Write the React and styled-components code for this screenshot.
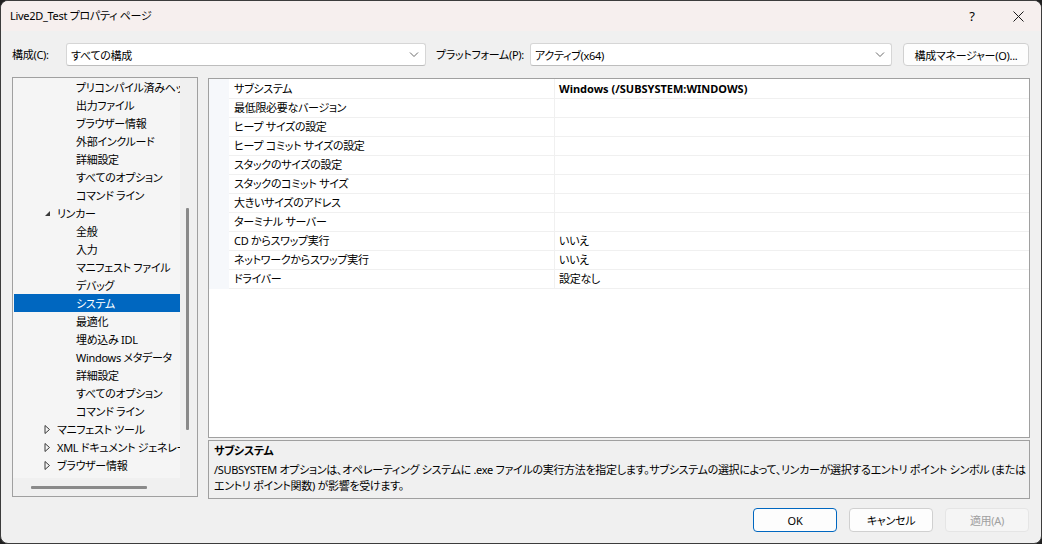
import React from 'react';
import styled, { createGlobalStyle } from 'styled-components';

const GlobalStyle = createGlobalStyle`
  html, body { margin: 0; padding: 0; background: #202020; }
  body {
    font-family: "Noto Sans", "Noto Sans CJK JP", sans-serif;
    font-size: 11px;
    letter-spacing: -0.3px;
    font-feature-settings: "palt";
    color: #000;
  }
  * { box-sizing: border-box; }
`;

const Window = styled.div`
  width: 1042px;
  height: 544px;
  display: flex;
  flex-direction: column;
  background: #f0f0f0;
  border: 1px solid #3c3c3c;
  border-radius: 8px;
  overflow: hidden;
`;

const TitleBar = styled.div`
  height: 30px;
  display: flex;
  align-items: center;
  background: #f6efee;
  padding-left: 9px;
  span { flex: 1; line-height: 30px; }
`;

const CaptionButton = styled.div`
  width: 46px;
  height: 30px;
  display: flex;
  align-items: center;
  justify-content: center;
  font-size: 13px;
`;

const Body = styled.div`
  flex: 1;
  min-width: 0;
  display: flex;
  flex-direction: column;
  padding: 12px 11px 0 11px;
`;

const Toolbar = styled.div`
  display: flex;
  align-items: center;
  height: 23px;
  white-space: nowrap;
`;

const Label = styled.label`
  width: ${p => p.w}px;
  flex: none;
  line-height: 23px;
  white-space: nowrap;
`;

const Combo = styled.div`
  width: ${p => p.w}px;
  height: 23px;
  flex: none;
  display: flex;
  align-items: center;
  justify-content: space-between;
  background: #fff;
  border: 1px solid #d6d6d6;
  border-bottom-color: #bdbdbd;
  border-radius: 3px;
  padding: 0 6px 0 4px;
  margin-right: ${p => p.mr || 0}px;
`;

const Button = styled.div`
  width: ${p => p.w || 84}px;
  height: ${p => p.h || 24}px;
  flex: none;
  display: flex;
  align-items: center;
  justify-content: center;
  white-space: nowrap;
  border-radius: 4px;
  background: ${p => (p.disabled ? '#f5f5f5' : '#fdfdfd')};
  border: 1px solid ${p => (p.primary ? '#0067c0' : p.disabled ? '#e5e5e5' : '#d0d0d0')};
  color: ${p => (p.disabled ? '#a0a0a0' : '#000')};
`;

const Main = styled.div`
  display: flex;
  gap: 10px;
  margin-top: 11px;
  height: 422px;
  min-width: 0;
`;

const TreePanel = styled.div`
  width: 186px;
  height: 420px;
  flex: none;
  border: 1px solid #a0a0a0;
  display: grid;
  grid-template-columns: 167px 17px;
  grid-template-rows: 400px 18px;
  background: #f0f0f0;
`;

const TreeView = styled.div`
  overflow: hidden;
  background: #f5f5f5;
  padding-left: 1px;
`;

const TreeRow = styled.div`
  height: 18px;
  line-height: 18px;
  padding-top: 1px;
  display: flex;
  align-items: center;
  white-space: nowrap;
  padding-left: ${p => (p.level === 2 ? 30 : 62)}px;
  background: ${p => (p.selected ? '#0067c0' : 'transparent')};
  color: ${p => (p.selected ? '#fff' : '#000')};
`;

const Expander = styled.span`
  width: 13px;
  flex: none;
  display: flex;
  align-items: center;
`;

const VScroll = styled.div`
  padding: 130px 0 0 6px;
`;

const VThumb = styled.div`
  width: 3px;
  height: 222px;
  background: #8a8a8a;
  border-radius: 1px;
`;

const HScroll = styled.div`
  grid-column: 1 / 3;
  padding: 8px 0 0 18px;
`;

const HThumb = styled.div`
  width: 116px;
  height: 3px;
  background: #8a8a8a;
  border-radius: 1px;
`;

const RightColumn = styled.div`
  flex: 1;
  min-width: 0;
  display: flex;
  flex-direction: column;
  gap: 2px;
  padding-top: 1px;
`;

const Grid = styled.div`
  height: 360px;
  border: 1px solid #a0a0a0;
  background: #fff;
  overflow: hidden;
`;

const PropRow = styled.div`
  display: grid;
  grid-template-columns: 20px 325px 1fr;
  height: 19px;
  line-height: 18px;
`;

const Gutter = styled.div`
  background: #f6f8fb;
`;

const NameCell = styled.div`
  padding: 1px 0 0 5px;
  border-bottom: 1px solid #f0f0f0;
  white-space: nowrap;
`;

const ValueCell = styled.div`
  padding: 1px 0 0 4px;
  border-bottom: 1px solid #f0f0f0;
  border-left: 1px solid #f0f0f0;
  font-weight: ${p => (p.bold ? 700 : 400)};
  letter-spacing: ${p => (p.bold ? '0' : '-0.3px')};
  white-space: nowrap;
`;

const Description = styled.div`
  height: 59px;
  border: 1px solid #a0a0a0;
  padding: 1px 5px;
  white-space: nowrap;
  overflow: hidden;
  h4 { margin: 0 0 2px; font-size: 11px; line-height: 18px; font-weight: 700; }
  p { margin: 0; line-height: 16px; }
`;

const Footer = styled.div`
  display: flex;
  justify-content: flex-end;
  gap: 12px;
  margin-top: 9px;
  padding-right: 1px;
`;

const Chevron = () => (
  <svg width="10" height="6" viewBox="0 0 10 6">
    <path d="M1 0.5 L5 4.5 L9 0.5" fill="none" stroke="#6a6a6a" strokeWidth="1" />
  </svg>
);

const Expanded = () => (
  <svg width="7" height="7" viewBox="0 0 7 7">
    <path d="M6 1 L6 6 L1 6 Z" fill="#3a3a3a" />
  </svg>
);

const Collapsed = () => (
  <svg width="7" height="9" viewBox="0 0 7 9">
    <path d="M1 0.5 L5.5 4.5 L1 8.5 Z" fill="none" stroke="#3a3a3a" strokeWidth="1" />
  </svg>
);

const treeItems = [
  { t: 'プリコンパイル済みヘッダー', l: 3 },
  { t: '出力ファイル', l: 3 },
  { t: 'ブラウザー情報', l: 3 },
  { t: '外部インクルード', l: 3 },
  { t: '詳細設定', l: 3 },
  { t: 'すべてのオプション', l: 3 },
  { t: 'コマンド ライン', l: 3 },
  { t: 'リンカー', l: 2, open: true },
  { t: '全般', l: 3 },
  { t: '入力', l: 3 },
  { t: 'マニフェスト ファイル', l: 3 },
  { t: 'デバッグ', l: 3 },
  { t: 'システム', l: 3, sel: true },
  { t: '最適化', l: 3 },
  { t: '埋め込み IDL', l: 3 },
  { t: 'Windows メタデータ', l: 3 },
  { t: '詳細設定', l: 3 },
  { t: 'すべてのオプション', l: 3 },
  { t: 'コマンド ライン', l: 3 },
  { t: 'マニフェスト ツール', l: 2 },
  { t: 'XML ドキュメント ジェネレーター', l: 2 },
  { t: 'ブラウザー情報', l: 2 },
  { t: 'ビルド イベント', l: 2 },
];

const props = [
  ['サブシステム', 'Windows (/SUBSYSTEM:WINDOWS)', true],
  ['最低限必要なバージョン', ''],
  ['ヒープ サイズの設定', ''],
  ['ヒープ コミット サイズの設定', ''],
  ['スタックのサイズの設定', ''],
  ['スタックのコミット サイズ', ''],
  ['大きいサイズのアドレス', ''],
  ['ターミナル サーバー', ''],
  ['CD からスワップ実行', 'いいえ'],
  ['ネットワークからスワップ実行', 'いいえ'],
  ['ドライバー', '設定なし'],
];

export default function App() {
  return (
    <>
      <GlobalStyle />
      <Window>
        <TitleBar>
          <span>Live2D_Test プロパティ ページ</span>
          <CaptionButton>?</CaptionButton>
          <CaptionButton>
            <svg width="11" height="11" viewBox="0 0 11 11">
              <path d="M0.5 0.5 L10.5 10.5 M10.5 0.5 L0.5 10.5" stroke="#1a1a1a" strokeWidth="1" />
            </svg>
          </CaptionButton>
        </TitleBar>
        <Body>
          <Toolbar>
            <Label w={54}>構成(C):</Label>
            <Combo w={360} mr={10}>
              <span>すべての構成</span>
              <Chevron />
            </Combo>
            <Label w={94}>プラットフォーム(P):</Label>
            <Combo w={362} mr={11}>
              <span>アクティブ(x64)</span>
              <Chevron />
            </Combo>
            <Button w={126} h={23}>構成マネージャー(O)...</Button>
          </Toolbar>
          <Main>
            <TreePanel>
              <TreeView>
                {treeItems.map((it, i) => (
                  <TreeRow key={i} level={it.l} selected={it.sel}>
                    {it.l === 2 && (
                      <Expander>{it.open ? <Expanded /> : <Collapsed />}</Expander>
                    )}
                    {it.t}
                  </TreeRow>
                ))}
              </TreeView>
              <VScroll>
                <VThumb />
              </VScroll>
              <HScroll>
                <HThumb />
              </HScroll>
            </TreePanel>
            <RightColumn>
              <Grid>
                {props.map(([n, v, b], i) => (
                  <PropRow key={i}>
                    <Gutter />
                    <NameCell>{n}</NameCell>
                    <ValueCell bold={b}>{v}</ValueCell>
                  </PropRow>
                ))}
              </Grid>
              <Description>
                <h4>サブシステム</h4>
                <p>
                  /SUBSYSTEM オプションは、オペレーティング システムに .exe ファイルの実行方法を指定します。サブシステムの選択によって、リンカーが選択するエントリ ポイント シンボル (または
                </p>
                <p>エントリ ポイント関数) が影響を受けます。</p>
              </Description>
            </RightColumn>
          </Main>
          <Footer>
            <Button primary>OK</Button>
            <Button>キャンセル</Button>
            <Button disabled>適用(A)</Button>
          </Footer>
        </Body>
      </Window>
    </>
  );
}
